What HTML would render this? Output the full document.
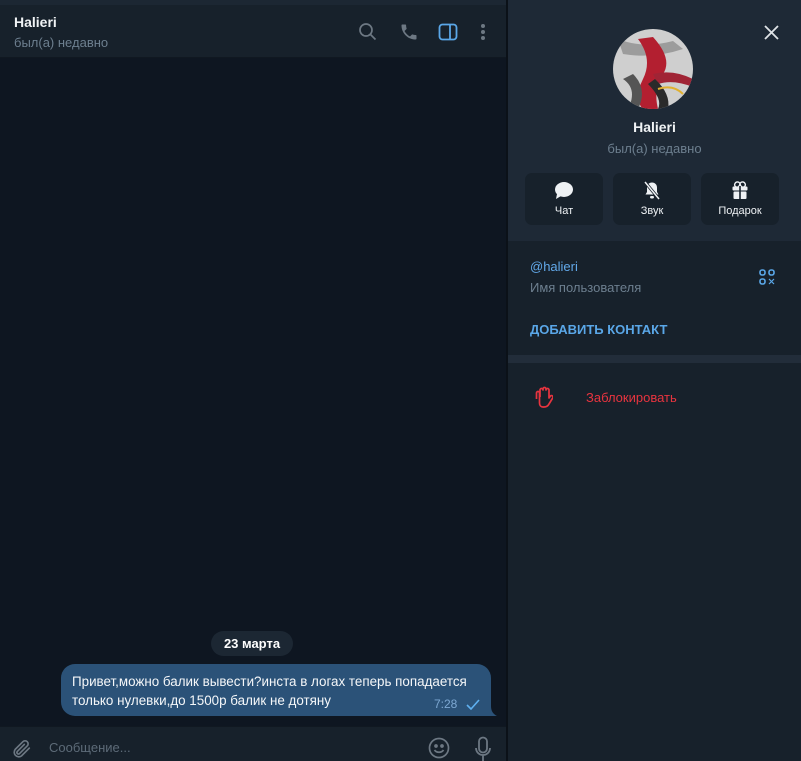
<!DOCTYPE html><html><head><meta charset="utf-8"><style>
*{margin:0;padding:0;box-sizing:border-box}
body{width:801px;height:761px;overflow:hidden;background:#0e1621;font-family:"Liberation Sans","Noto Sans CJK SC",sans-serif;position:relative}
.abs{position:absolute}
</style></head><body>
<div class="abs" style="left:0;top:0;width:507px;height:5px;background:#1c2733"></div>
<div class="abs" style="left:0;top:5px;width:507px;height:53px;background:#17212b;border-bottom:1px solid #101821"></div>
<div class="abs" style="left:14px;top:14px;color:#f0f3f5;font-weight:bold;font-size:14px">Halieri</div>
<div class="abs" style="left:14px;top:35px;color:#6d7f8f;font-size:13px">был(а) недавно</div>
<svg class="abs" style="left:358px;top:22px" width="20" height="20" viewBox="0 0 20 20" fill="none" stroke="#6d7883" stroke-width="1.7"><circle cx="8" cy="8" r="6"/><path d="M12.5 12.5L17.5 17.5"/></svg>
<svg class="abs" style="left:399px;top:22px" width="20" height="20" viewBox="0 0 24 24" fill="#6d7883"><path d="M6.6 10.8c1.4 2.8 3.8 5.1 6.6 6.6l2.2-2.2c.3-.3.7-.4 1-.2 1.1.4 2.3.6 3.6.6.6 0 1 .4 1 1V20c0 .6-.4 1-1 1C10.6 21 3 13.4 3 4c0-.6.4-1 1-1h3.5c.6 0 1 .4 1 1 0 1.3.2 2.5.6 3.6.1.3 0 .7-.2 1z"/></svg>
<svg class="abs" style="left:438px;top:23px" width="20" height="18" viewBox="0 0 20 18" fill="none" stroke="#5aa7e8" stroke-width="1.8"><rect x="1.5" y="1.5" width="17" height="15" rx="3"/><path d="M12 1.5v15"/></svg>
<svg class="abs" style="left:479px;top:23px" width="8" height="18"><circle cx="4" cy="3" r="2" fill="#6d7883"/><circle cx="4" cy="9" r="2" fill="#6d7883"/><circle cx="4" cy="15" r="2" fill="#6d7883"/></svg>

<div class="abs" style="left:211px;top:631px;width:82px;height:25px;border-radius:13px;background:#1c2733;color:#fff;font-weight:bold;font-size:13px;text-align:center;line-height:25px">23 марта</div>
<div class="abs" style="left:61px;top:664px;width:430px;height:52px;border-radius:14px 14px 0 14px;background:#2b5278"></div>
<svg class="abs" style="left:488px;top:706px" width="10" height="10"><path d="M0 0V10H9C5 8 3 5 3 0Z" fill="#2b5278"/></svg>
<div class="abs" style="left:72px;top:672px;color:#f5f7f9;font-size:13.4px;line-height:19px">Привет,можно балик вывести?инста в логах теперь попадается<br>только нулевки,до 1500р балик не дотяну</div>
<div class="abs" style="left:434px;top:697px;color:#7da8d3;font-size:12px">7:28</div>
<svg class="abs" style="left:466px;top:699px" width="14" height="11" fill="none" stroke="#5fb0f0" stroke-width="1.6"><path d="M1 6l4 4 8-9"/></svg>

<div class="abs" style="left:0;top:726px;width:507px;height:35px;background:#17212b;border-top:1px solid #101821"></div>
<svg class="abs" style="left:11px;top:738px" width="22" height="22" viewBox="0 0 24 24" fill="none" stroke="#6d7883" stroke-width="1.8" stroke-linecap="round"><path d="M20 11l-8.5 8.5a5 5 0 01-7-7L13 4a3.3 3.3 0 014.7 4.7L9.3 17a1.7 1.7 0 01-2.4-2.4L14.5 7"/></svg>
<div class="abs" style="left:49px;top:740px;color:#5d6b78;font-size:13px">Сообщение...</div>
<svg class="abs" style="left:428px;top:737px" width="22" height="22" fill="none" stroke="#6d7883" stroke-width="1.7"><circle cx="11" cy="11" r="9.5"/><circle cx="8" cy="9" r="1" fill="#6d7883"/><circle cx="14" cy="9" r="1" fill="#6d7883"/><path d="M6.5 13c2 3 7 3 9 0"/></svg>
<svg class="abs" style="left:474px;top:736px" width="18" height="25" fill="none" stroke="#6d7883" stroke-width="1.8"><rect x="5" y="1.5" width="8" height="15" rx="4"/><path d="M2 12a7 7 0 0014 0M9 19v6"/></svg>

<div class="abs" style="left:506px;top:0;width:2px;height:761px;background:#0b1118"></div>
<div class="abs" style="left:508px;top:0;width:293px;height:241px;background:#1e2936"></div>
<div class="abs" style="left:508px;top:241px;width:293px;height:520px;background:#17212b"></div>
<div class="abs" style="left:508px;top:355px;width:293px;height:8px;background:#222d3a"></div>
<svg class="abs" style="left:764px;top:25px" width="15" height="15" stroke="#dfe3e7" stroke-width="1.8"><path d="M1 1L14 14M14 1L1 14"/></svg>
<svg class="abs" style="left:613px;top:29px" width="80" height="80" viewBox="0 0 80 80">
<defs><clipPath id="c"><circle cx="40" cy="40" r="40"/></clipPath></defs>
<g clip-path="url(#c)">
<rect width="80" height="80" fill="#cfcfcf"/>
<path d="M5 10 Q30 20 60 12 L70 20 Q40 30 10 25Z" fill="#7a7a7a" opacity=".6"/>
<path d="M25 10 Q40 30 30 50 Q20 70 30 80 L45 80 Q40 60 50 45 Q60 30 40 8Z" fill="#b31f30"/>
<path d="M40 45 Q60 40 80 50 L80 58 Q60 50 45 55Z" fill="#a02435"/>
<path d="M10 50 Q25 60 15 80 L25 80 Q35 60 20 45Z" fill="#555"/>
<path d="M35 55 Q50 70 45 80 L55 80 Q58 65 42 50Z" fill="#2a2a2a"/>
<path d="M45 60 Q60 55 70 65" stroke="#e0b030" stroke-width="2" fill="none"/>
</g></svg>
<div class="abs" style="left:508px;top:119px;width:293px;text-align:center;color:#f0f3f5;font-weight:bold;font-size:14px">Halieri</div>
<div class="abs" style="left:508px;top:141px;width:293px;text-align:center;color:#6d7f8f;font-size:13px">был(а) недавно</div>

<div class="abs" style="left:525px;top:173px;width:78px;height:52px;border-radius:7px;background:#17212b"></div>
<div class="abs" style="left:613px;top:173px;width:78px;height:52px;border-radius:7px;background:#17212b"></div>
<div class="abs" style="left:701px;top:173px;width:78px;height:52px;border-radius:7px;background:#17212b"></div>
<svg class="abs" style="left:554px;top:181px" width="20" height="19"><ellipse cx="10" cy="8.5" rx="9" ry="7.5" fill="#eef1f4"/><path d="M3 13L2 18 7 15Z" fill="#eef1f4"/></svg>
<svg class="abs" style="left:643px;top:181px" width="18" height="19" fill="#eef1f4"><path d="M9 1.5c-3 0-5 2.2-5 5V11L2.5 13.5h13L14 11V6.5c0-2.8-2-5-5-5z"/><rect x="7" y="15" width="4" height="2.5" rx="1.2"/><path d="M2 1L16 18" stroke="#17212b" stroke-width="3"/><path d="M2 1L16 18" stroke="#eef1f4" stroke-width="1.5"/></svg>
<svg class="abs" style="left:731px;top:181px" width="18" height="19" fill="#eef1f4"><path d="M4 2.5a2.5 2.5 0 015 2.5h-1a2 2 0 01-4-2.5zM14 2.5a2.5 2.5 0 00-5 2.5h1a2 2 0 004-2.5z" fill="none" stroke="#eef1f4" stroke-width="1.4"/><rect x="1.5" y="5.5" width="15" height="4" rx="1"/><rect x="2.5" y="10.5" width="13" height="7.5" rx="1"/><rect x="8.2" y="5" width="1.6" height="14" fill="#17212b"/></svg>
<div class="abs" style="left:525px;top:205px;width:78px;text-align:center;color:#eef1f4;font-size:11px">Чат</div>
<div class="abs" style="left:613px;top:205px;width:78px;text-align:center;color:#eef1f4;font-size:11px">Звук</div>
<div class="abs" style="left:701px;top:205px;width:78px;text-align:center;color:#eef1f4;font-size:11px">Подарок</div>

<div class="abs" style="left:530px;top:259px;color:#62a9ea;font-size:13px">@halieri</div>
<div class="abs" style="left:530px;top:280px;color:#6d7f8f;font-size:13px">Имя пользователя</div>
<svg class="abs" style="left:759px;top:269px" width="16" height="16" fill="none" stroke="#5aa7e8" stroke-width="1.6"><rect x="1" y="1" width="5" height="5" rx="2"/><rect x="10" y="1" width="5" height="5" rx="2"/><rect x="1" y="10" width="5" height="5" rx="2"/><path d="M10 10l5 5M15 10l-5 5" stroke-width="1.2"/></svg>
<div class="abs" style="left:530px;top:322px;color:#5aa7e8;font-size:13px;font-weight:bold">ДОБАВИТЬ КОНТАКТ</div>
<svg class="abs" style="left:535px;top:386px" width="18" height="22" fill="none" stroke="#e8343f" stroke-width="1.7" stroke-linejoin="round"><path d="M5 11V4a1.5 1.5 0 013 0V3a1.5 1.5 0 013 0v1a1.5 1.5 0 013 0v8l1.3-1.8a1.5 1.5 0 012.4 1.8L14 18c-1 2-2.5 3-5 3H8c-2 0-3.5-1.5-3.5-4V7a1.5 1.5 0 00-3 0v6"/></svg>
<div class="abs" style="left:586px;top:390px;color:#e8343f;font-size:13px">Заблокировать</div>
</body></html>
